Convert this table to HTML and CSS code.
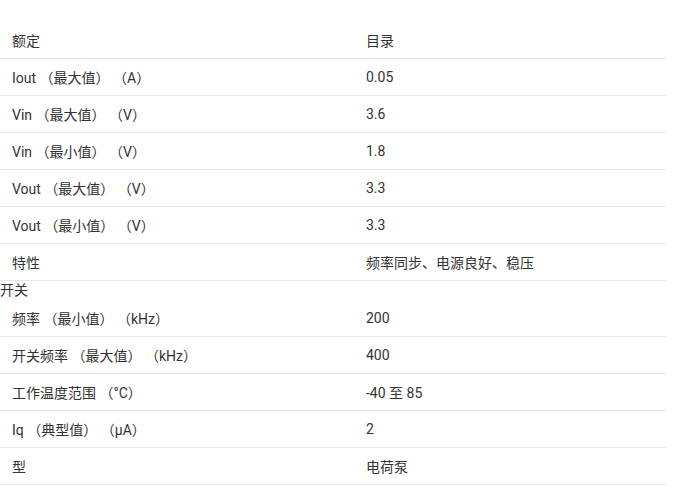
FILE: index.html
```html
<!DOCTYPE html>
<html lang="zh-CN">
<head>
<meta charset="utf-8">
<link rel="stylesheet" href="styles.css">
</head>
<body>
<div class="page">
  <div class="row"><div class="cell name">额定</div><div class="cell val">目录</div></div>
  <div class="row"><div class="cell name">Iout （最大值） （A）</div><div class="cell val">0.05</div></div>
  <div class="row"><div class="cell name">Vin （最大值） （V）</div><div class="cell val">3.6</div></div>
  <div class="row"><div class="cell name">Vin （最小值） （V）</div><div class="cell val">1.8</div></div>
  <div class="row"><div class="cell name">Vout （最大值） （V）</div><div class="cell val">3.3</div></div>
  <div class="row"><div class="cell name">Vout （最小值） （V）</div><div class="cell val">3.3</div></div>
  <div class="row"><div class="cell name">特性</div><div class="cell val">频率同步、电源良好、稳压</div></div>
  <div class="group">开关</div>
  <div class="row"><div class="cell name">频率 （最小值） （kHz）</div><div class="cell val">200</div></div>
  <div class="row"><div class="cell name">开关频率 （最大值） （kHz）</div><div class="cell val">400</div></div>
  <div class="row"><div class="cell name">工作温度范围 （°C）</div><div class="cell val">-40 至 85</div></div>
  <div class="row"><div class="cell name">Iq （典型值） （μA）</div><div class="cell val">2</div></div>
  <div class="row"><div class="cell name">型</div><div class="cell val">电荷泵</div></div>
</div>
</body>
</html>
```
FILE: styles.css
```css
html, body {
  margin: 0;
  padding: 0;
  background: #fff;
}
body {
  font-family: Roboto, "Noto Sans CJK SC", sans-serif;
  font-size: 14px;
  color: #333;
}
.page {
  width: 666px;
  padding-top: 22px;
}
.row {
  display: grid;
  grid-template-columns: 354px 312px;
  height: 36px;
  border-bottom: 1px solid #e5e5e5;
}
.row + .row,
.group + .row {
  border-top: none;
}
.cell {
  display: flex;
  align-items: center;
  padding-left: 12px;
  white-space: nowrap;
}
.group {
  height: 19px;
  line-height: 19px;
  padding-left: 0;
}
```
